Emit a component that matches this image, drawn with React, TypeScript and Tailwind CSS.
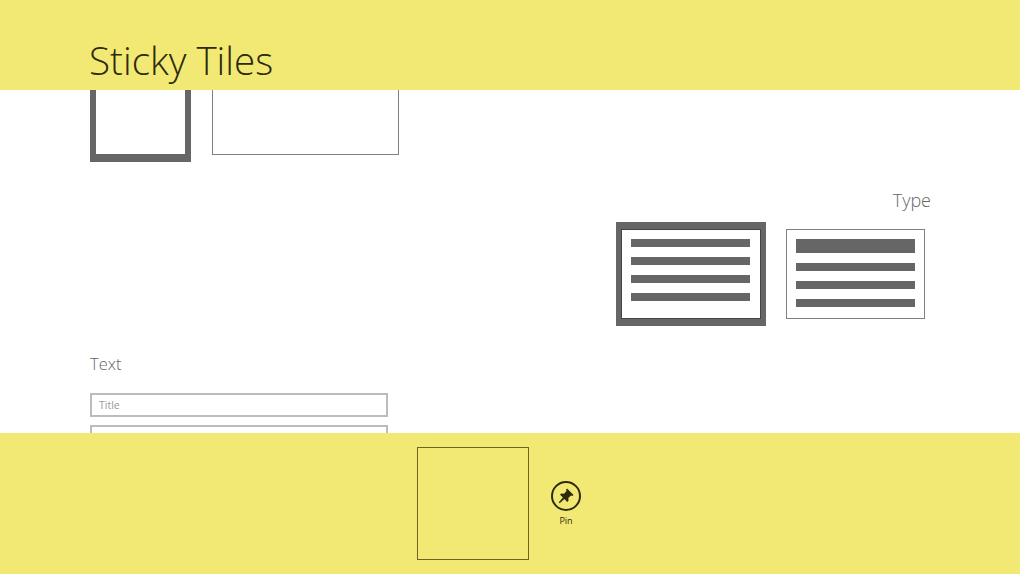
function LinesIcon({ big }: { big?: boolean }) {
  return (
    <div className="flex w-[119px] flex-col gap-[10px]">
      <div className={big ? "h-[14px] bg-[#666666]" : "h-[8px] bg-[#666666]"} />
      <div className="h-[8px] bg-[#666666]" />
      <div className="h-[8px] bg-[#666666]" />
      <div className="h-[8px] bg-[#666666]" />
    </div>
  );
}

function PinButton() {
  return (
    <div className="ml-[21px] mt-[48px] flex w-[32px] flex-col items-center">
      <div className="flex h-[30px] w-[30px] items-center justify-center rounded-full border-2 border-[#2e2a0c]">
        <svg viewBox="0 0 20 20" className="h-[18px] w-[18px]" fill="#2e2a0c">
          <path d="M11.2 1.6 L18.4 8.8 L17 10 L15.6 9.4 L12.6 12.2 L12.8 15.4 L11.4 16.6 L8.2 13.4 L3 18 L2 17 L6.6 11.8 L3.4 8.6 L4.6 7.2 L7.8 7.4 L10.6 4.4 L10 3 Z" />
        </svg>
      </div>
      <span className="mt-[4px] text-[9px] leading-[11px] text-[#2e2a0c]">Pin</span>
    </div>
  );
}

export default function App() {
  return (
    <div className="flex h-[574px] w-[1020px] flex-col overflow-hidden bg-white font-['Open_Sans','Liberation_Sans',sans-serif]">
      <header className="h-[90px] shrink-0 bg-[#f2e975] pl-[89px] pt-[32px]">
        <h1 className="text-[38.6px] leading-[56px] font-light text-[#2e2a0c]">Sticky Tiles</h1>
      </header>

      <main className="min-h-0 flex-1 overflow-hidden px-[90px]">
        <div className="-mt-[20px] flex items-start gap-[21px]">
          <div className="h-[92px] w-[101px] border-x-[6px] border-b-[8px] border-[#666666]" />
          <div className="h-[85px] w-[187px] border border-[#808080]" />
        </div>

        <div className="mt-[25px] flex justify-end">
          <span className="-mr-[1px] text-[18px] leading-[26px] font-light text-[#666666]">Type</span>
        </div>

        <div className="mt-[9px] flex items-center justify-end gap-[20px] pr-[5px]">
          <div className="flex h-[104px] w-[150px] items-center justify-center border-x-[5px] border-y-[7px] border-[#666666]">
            <div className="flex h-full w-full justify-center border border-[#444444] pr-[1px] pt-[9px]">
              <LinesIcon />
            </div>
          </div>
          <div className="flex h-[90px] w-[139px] justify-center border border-[#808080] pt-[9px]">
            <LinesIcon big />
          </div>
        </div>

        <div className="mt-[24px] text-[16.5px] leading-[28px] font-light text-[#666666]">Text</div>

        <div className="mt-[15px] flex h-[24px] w-[298px] items-center border-2 border-[#bcbcbc] pl-[7px] pt-[2px] text-[10.5px] text-[#999999]">
          Title
        </div>
        <div className="mt-[8px] h-[24px] w-[298px] border-2 border-[#bcbcbc]" />
      </main>

      <footer className="flex h-[141px] shrink-0 bg-[#f2e975] pl-[417px]">
        <div className="mt-[14px] h-[113px] w-[112px] border border-[#6b6620]" />
        <PinButton />
      </footer>
    </div>
  );
}
